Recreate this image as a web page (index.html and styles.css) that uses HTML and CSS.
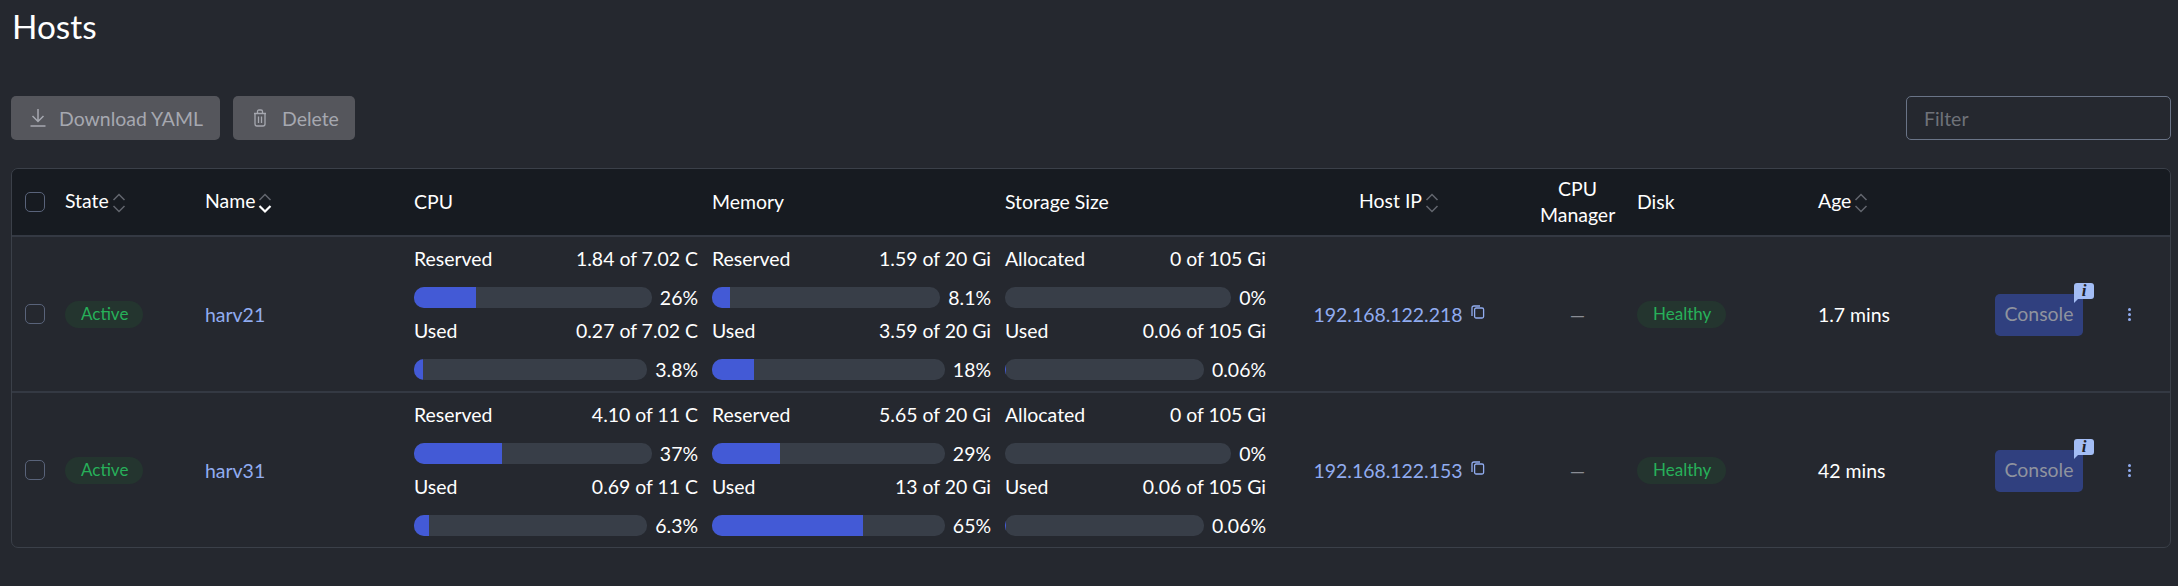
FILE: index.html
```html
<!DOCTYPE html>
<html lang="en">
<head>
    <meta charset="UTF-8">
    <title>Hosts</title>
    <link rel="stylesheet" href="styles.css">
</head>
<body>
    <svg class="defs" width="0" height="0">
        <symbol id="sort" viewBox="0 0 14 26">
            <path d="M1.5 10 L7 4.5 L12.5 10" fill="none" stroke="currentColor" stroke-width="1.5"/>
            <path d="M1.5 16 L7 21.5 L12.5 16" fill="none" stroke="currentColor" stroke-width="1.5"/>
        </symbol>
        <symbol id="sort-down" viewBox="0 0 14 26">
            <path d="M1.5 10 L7 4.5 L12.5 10" fill="none" stroke="#62666e" stroke-width="1.5"/>
            <path d="M1.5 16 L7 21.5 L12.5 16" fill="none" stroke="#fff" stroke-width="2.2"/>
        </symbol>
        <symbol id="copy" viewBox="0 0 14 14">
            <path d="M1 11 V3 Q1 1 3 1 H9" fill="none" stroke="currentColor" stroke-width="1.3"/>
            <rect x="3.6" y="3" width="9" height="10" rx="1.5" fill="none" stroke="currentColor" stroke-width="1.3"/>
        </symbol>
    </svg>

    <h1 class="title">Hosts</h1>

    <!-- actions and filter -->
    <div class="toolbar">
        <button class="btn btn-download">
            <svg class="btn-icon" width="18" height="20" viewBox="0 0 18 20">
                <path d="M9 1 V13 M3.5 8 L9 13.5 L14.5 8 M1.5 18 H16.5" fill="none" stroke="currentColor" stroke-width="1.5"/>
            </svg>
            Download YAML
        </button>
        <button class="btn btn-delete">
            <svg class="btn-icon" width="14" height="18" viewBox="0 0 14 18">
                <path d="M1 4.5 H13 M4.5 4.5 V2.5 Q4.5 1 6 1 H8 Q9.5 1 9.5 2.5 V4.5 M2 4.5 V15 Q2 17 4 17 H10 Q12 17 12 15 V4.5 M5.5 7.5 V14 M8.5 7.5 V14" fill="none" stroke="currentColor" stroke-width="1.3"/>
            </svg>
            Delete
        </button>
        <input class="filter" type="text" placeholder="Filter">
    </div>

    <div class="table-wrap">
        <table class="hosts">
            <colgroup>
                <col class="col-check"><col class="col-state"><col class="col-name">
                <col class="col-cpu"><col class="col-mem"><col class="col-storage">
                <col class="col-ip"><col class="col-mgr"><col class="col-disk">
                <col class="col-age"><col class="col-console"><col>
            </colgroup>
            <thead>
                <tr>
                    <th><span class="check"></span></th>
                    <th>State<svg class="sort"><use href="#sort"/></svg></th>
                    <th>Name<svg class="sort"><use href="#sort-down"/></svg></th>
                    <th>CPU</th>
                    <th>Memory</th>
                    <th>Storage Size</th>
                    <th class="center">Host IP<svg class="sort"><use href="#sort"/></svg></th>
                    <th class="center">CPU Manager</th>
                    <th>Disk</th>
                    <th>Age<svg class="sort"><use href="#sort"/></svg></th>
                    <th></th>
                    <th></th>
                </tr>
            </thead>
            <tbody>
                <tr>
                    <td><span class="check"></span></td>
                    <td><span class="badge">Active</span></td>
                    <td><a class="link">harv21</a></td>
                    <td>
                        <div class="stat"><div class="stat-head"><span>Reserved</span><span>1.84 of 7.02 C</span></div>
                        <div class="stat-bar"><div class="track"><div class="fill" style="width:26%"></div></div><span>26%</span></div></div>
                        <div class="stat"><div class="stat-head"><span>Used</span><span>0.27 of 7.02 C</span></div>
                        <div class="stat-bar"><div class="track"><div class="fill" style="width:3.8%"></div></div><span>3.8%</span></div></div>
                    </td>
                    <td>
                        <div class="stat"><div class="stat-head"><span>Reserved</span><span>1.59 of 20 Gi</span></div>
                        <div class="stat-bar"><div class="track"><div class="fill" style="width:8.1%"></div></div><span>8.1%</span></div></div>
                        <div class="stat"><div class="stat-head"><span>Used</span><span>3.59 of 20 Gi</span></div>
                        <div class="stat-bar"><div class="track"><div class="fill" style="width:18%"></div></div><span>18%</span></div></div>
                    </td>
                    <td>
                        <div class="stat"><div class="stat-head"><span>Allocated</span><span>0 of 105 Gi</span></div>
                        <div class="stat-bar"><div class="track"></div><span>0%</span></div></div>
                        <div class="stat"><div class="stat-head"><span>Used</span><span>0.06 of 105 Gi</span></div>
                        <div class="stat-bar"><div class="track"><div class="fill" style="width:0.06%"></div></div><span>0.06%</span></div></div>
                    </td>
                    <td class="center"><a class="link">192.168.122.218</a><svg class="copy"><use href="#copy"/></svg></td>
                    <td class="center dash">&mdash;</td>
                    <td><span class="badge">Healthy</span></td>
                    <td>1.7 mins</td>
                    <td><span class="console">Console<span class="info">i</span></span></td>
                    <td><span class="dots"><i></i><i></i><i></i></span></td>
                </tr>
                <tr>
                    <td><span class="check"></span></td>
                    <td><span class="badge">Active</span></td>
                    <td><a class="link">harv31</a></td>
                    <td>
                        <div class="stat"><div class="stat-head"><span>Reserved</span><span>4.10 of 11 C</span></div>
                        <div class="stat-bar"><div class="track"><div class="fill" style="width:37%"></div></div><span>37%</span></div></div>
                        <div class="stat"><div class="stat-head"><span>Used</span><span>0.69 of 11 C</span></div>
                        <div class="stat-bar"><div class="track"><div class="fill" style="width:6.3%"></div></div><span>6.3%</span></div></div>
                    </td>
                    <td>
                        <div class="stat"><div class="stat-head"><span>Reserved</span><span>5.65 of 20 Gi</span></div>
                        <div class="stat-bar"><div class="track"><div class="fill" style="width:29%"></div></div><span>29%</span></div></div>
                        <div class="stat"><div class="stat-head"><span>Used</span><span>13 of 20 Gi</span></div>
                        <div class="stat-bar"><div class="track"><div class="fill" style="width:65%"></div></div><span>65%</span></div></div>
                    </td>
                    <td>
                        <div class="stat"><div class="stat-head"><span>Allocated</span><span>0 of 105 Gi</span></div>
                        <div class="stat-bar"><div class="track"></div><span>0%</span></div></div>
                        <div class="stat"><div class="stat-head"><span>Used</span><span>0.06 of 105 Gi</span></div>
                        <div class="stat-bar"><div class="track"><div class="fill" style="width:0.06%"></div></div><span>0.06%</span></div></div>
                    </td>
                    <td class="center"><a class="link">192.168.122.153</a><svg class="copy"><use href="#copy"/></svg></td>
                    <td class="center dash">&mdash;</td>
                    <td><span class="badge">Healthy</span></td>
                    <td>42 mins</td>
                    <td><span class="console">Console<span class="info">i</span></span></td>
                    <td><span class="dots"><i></i><i></i><i></i></span></td>
                </tr>
            </tbody>
        </table>
    </div>
</body>
</html>
```

FILE: styles.css
```css
* {
    box-sizing: border-box;
}
body {
    margin: 0;
    padding: 0 7px 0 11px;
    background-color: #25282f;
    color: #fff;
    font-family: Lato, "Liberation Sans", sans-serif;
    font-size: 19.44px;
}
.defs {
    position: absolute;
}
.title {
    margin: 0;
    padding-left: 1px;
    height: 96px;
    padding-top: 4px;
    font-size: 33.3px;
    font-weight: 400;
    line-height: 44px;
}

/* toolbar */
.toolbar {
    display: flex;
    gap: 13px;
    height: 44px;
}
.btn {
    display: flex;
    align-items: center;
    border: 0;
    border-radius: 5px;
    padding: 0;
    background-color: #55565c;
    color: #a6a8b0;
    font: inherit;
}
.btn-download {
    width: 209px;
    padding-left: 18px;
    gap: 12px;
}
.btn-delete {
    width: 122px;
    padding-left: 20px;
    gap: 15px;
}
.filter {
    margin-left: auto;
    width: 265px;
    height: 44px;
    border: 1px solid #6a7487;
    border-radius: 5px;
    padding: 0 17px;
    background: transparent;
    color: #fff;
    font: inherit;
}
.filter::placeholder {
    color: #6f7279;
}

/* table */
.table-wrap {
    margin-top: 28px;
    border: 1px solid #3b4049;
    border-radius: 7px;
    overflow: hidden;
}
.hosts {
    width: 100%;
    border-collapse: collapse;
    table-layout: fixed;
}
.col-check { width: 42px; }
.col-state { width: 140px; }
.col-name { width: 209px; }
.col-cpu { width: 298px; }
.col-mem { width: 293px; }
.col-storage { width: 275px; }
.col-ip { width: 260px; }
.col-mgr { width: 97px; }
.col-disk { width: 181px; }
.col-age { width: 177px; }
.col-console { width: 126px; }
.hosts th {
    height: 67px;
    padding: 0 11px;
    background-color: #171b21;
    border-bottom: 2px solid #343943;
    font-weight: 400;
    text-align: left;
    line-height: 26px;
}
.hosts td {
    padding: 0 3px 0 11px;
    vertical-align: middle;
}
.hosts tbody tr {
    height: 155px;
}
.hosts tbody tr:first-child {
    height: 156px;
}
.hosts tbody tr + tr td {
    border-top: 2px solid #343943;
}
.hosts th:first-child,
.hosts td:first-child {
    padding: 0 0 0 13px;
}
.hosts .center {
    padding: 0 11px;
    text-align: center;
}
.sort {
    width: 14px;
    height: 26px;
    margin-left: 3px;
    color: #62666e;
    vertical-align: middle;
}
.check {
    display: block;
    width: 20px;
    height: 20px;
    border: 1.5px solid #59637a;
    border-radius: 5px;
}
.link {
    color: #91acf0;
}
.badge {
    display: inline-block;
    height: 27px;
    padding: 0 15px 0 16px;
    border-radius: 14px;
    background-color: #24352f;
    color: #27b05a;
    font-size: 17px;
    line-height: 26px;
}
.dash {
    color: #8a8d95;
}
.copy {
    width: 14px;
    height: 14px;
    margin-left: 8px;
    color: #91acf0;
    vertical-align: 3px;
}

/* resource bars */
.stat {
    padding-bottom: 4px;
}
.stat + .stat {
    margin-top: 5px;
}
.stat-head,
.stat-bar {
    display: flex;
    justify-content: space-between;
    align-items: center;
}
.stat-head {
    height: 28px;
    margin-bottom: 14px;
}
.stat-bar {
    gap: 8px;
    height: 21px;
}
.track {
    flex: 1;
    height: 21px;
    border-radius: 10px;
    background-color: #383e48;
    overflow: hidden;
}
.fill {
    height: 100%;
    background-color: #435ad6;
}

/* console */
.console {
    position: relative;
    display: block;
    width: 88px;
    height: 42px;
    margin-top: 1px;
    border-radius: 5px;
    background-color: #30407f;
    color: #8f939e;
    line-height: 40px;
    text-align: center;
}
.info {
    position: absolute;
    top: -11px;
    right: -11px;
    width: 20px;
    height: 16px;
    border-radius: 3px 3px 3px 0;
    background-color: #a3bdf5;
    color: #1e2128;
    font-family: "Liberation Serif", serif;
    font-size: 17px;
    font-style: italic;
    font-weight: 700;
    line-height: 16px;
}
.info::after {
    content: "";
    position: absolute;
    left: 0;
    top: 16px;
    border-top: 4px solid #a3bdf5;
    border-right: 4px solid transparent;
}
.dots {
    display: flex;
    flex-direction: column;
    gap: 2px;
    width: 4px;
    margin-left: 7px;
}
.dots i {
    width: 3px;
    height: 3px;
    border-radius: 50%;
    background-color: #91acf0;
}
```
